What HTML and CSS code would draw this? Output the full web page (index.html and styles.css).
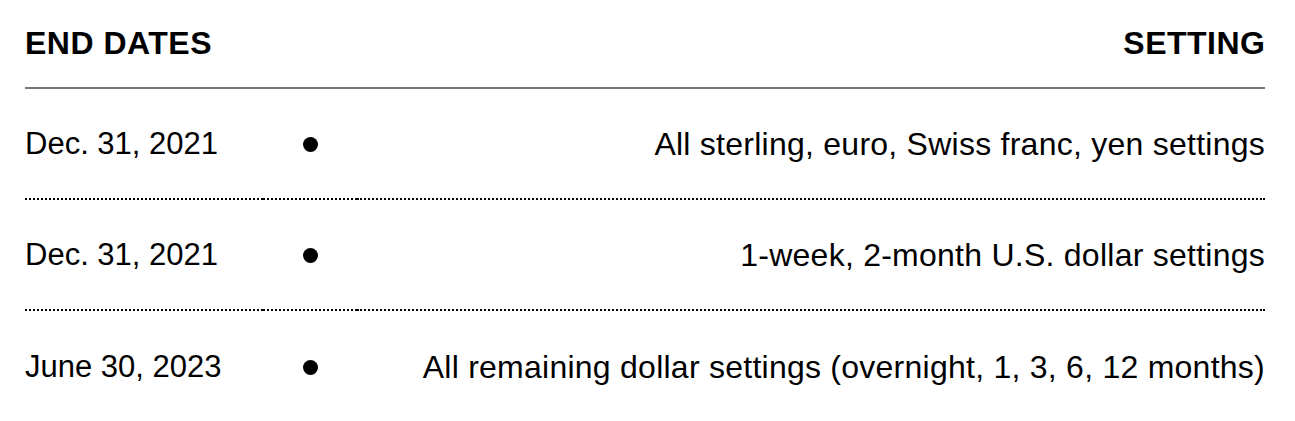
FILE: index.html
```html
<!DOCTYPE html>
<html lang="en">
<head>
<meta charset="utf-8">
<title>End dates</title>
<link rel="stylesheet" href="styles.css">
</head>
<body>
<div class="table">
  <div class="head">
    <div class="h-left">END DATES</div>
    <div class="h-right">SETTING</div>
  </div>
  <div class="row">
    <div class="cell date">Dec. 31, 2021</div>
    <div class="cell mark"><span class="dot"></span></div>
    <div class="cell setting">All sterling, euro, Swiss franc, yen settings</div>
  </div>
  <div class="row">
    <div class="cell date">Dec. 31, 2021</div>
    <div class="cell mark"><span class="dot"></span></div>
    <div class="cell setting">1-week, 2-month U.S. dollar settings</div>
  </div>
  <div class="row last">
    <div class="cell date">June 30, 2023</div>
    <div class="cell mark"><span class="dot"></span></div>
    <div class="cell setting">All remaining dollar settings (overnight, 1, 3, 6, 12 months)</div>
  </div>
</div>
</body>
</html>
```

FILE: styles.css
```css
* { box-sizing: border-box; }
html, body { margin: 0; padding: 0; background: #fff; }
body {
  font-family: "Liberation Sans", Arial, sans-serif;
  color: #000;
}
.table {
  padding: 0 30px 0 25px;
}
.head {
  display: flex;
  justify-content: space-between;
  align-items: center;
  padding-top: 25px;
  height: 89px;
  padding-bottom: 26px;
  border-bottom: 2px solid #777;
  font-weight: bold;
  font-size: 32px;
  line-height: 36px;
  letter-spacing: 0.5px;
}
.h-right { margin-right: -0.5px; }
.row {
  display: grid;
  grid-template-columns: 238px 94px 1fr;
}
.cell {
  height: 111px;
  display: flex;
  align-items: center;
  border-bottom: 2px dotted #000;
  font-size: 31px;
  line-height: 36px;
}
.row.last .cell { border-bottom: none; }
.mark { justify-content: center; }
.setting {
  justify-content: flex-end;
  text-align: right;
  font-size: 32px;
  letter-spacing: 0.25px;
}
.dot {
  width: 15px;
  height: 15px;
  border-radius: 50%;
  background: #000;
  margin-top: 2px;
}
```
